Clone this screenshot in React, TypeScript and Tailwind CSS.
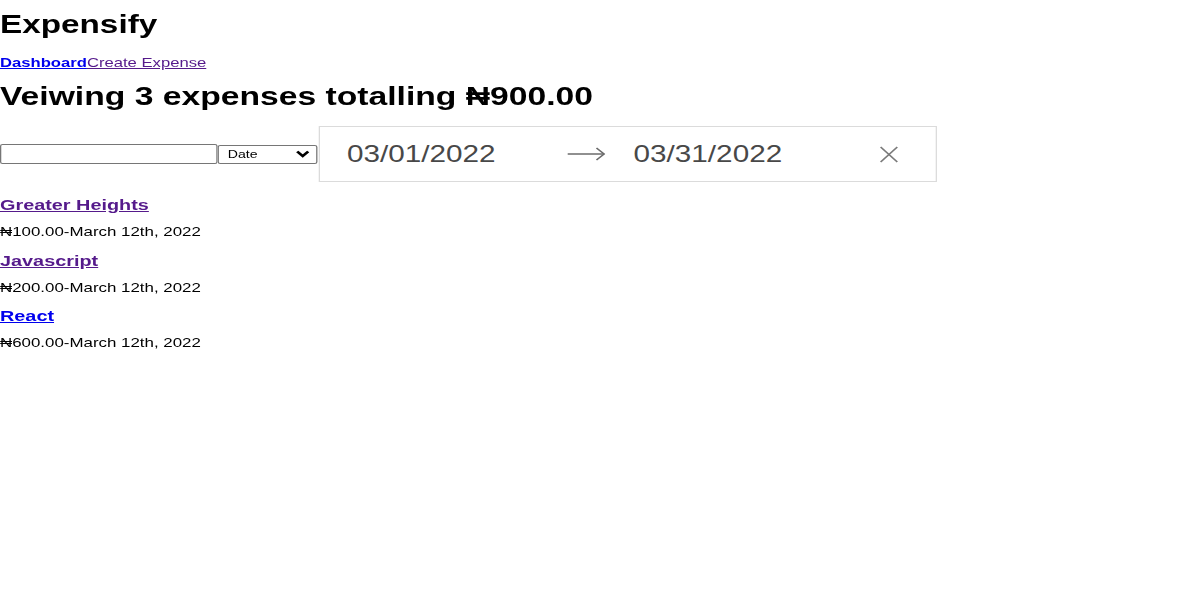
import { useState } from "react";

interface Expense {
    id: number;
    description: string;
    amount: string;
    createdAt: string;
    visited: boolean;
}

const expenses: Expense[] = [
    { id: 1, description: "Greater Heights", amount: "₦100.00", createdAt: "March 12th, 2022", visited: true },
    { id: 2, description: "Javascript", amount: "₦200.00", createdAt: "March 12th, 2022", visited: true },
    { id: 3, description: "React", amount: "₦600.00", createdAt: "March 12th, 2022", visited: false },
];

function ArrowIcon() {
    return (
        <svg width="30" height="16" viewBox="0 0 30 16" fill="none" stroke="#6b6b6b" strokeWidth="1.3">
            <path d="M0.5 8 H29" />
            <path d="M23 2 L29 8 L23 14" />
        </svg>
    );
}

function CloseIcon() {
    return (
        <svg width="15" height="17" viewBox="0 0 15 17" fill="none" stroke="#7a7a7a" strokeWidth="1.3">
            <path d="M1 1 L14 16" />
            <path d="M14 1 L1 16" />
        </svg>
    );
}

export default function App() {
    const [text, setText] = useState("");
    const [sortBy, setSortBy] = useState("date");

    return (
        <div className="min-h-[600px] w-[1200px] overflow-hidden bg-white text-black font-['Liberation_Sans',Arial,sans-serif]">
            {/* the whole page is drawn stretched sideways */}
            <div className="w-[938px] origin-top-left scale-x-[1.28]">
                <h1 className="pt-[9px] text-[26px] leading-[30px] font-bold">Expensify</h1>

                <nav className="mt-[16px] flex text-[13px] leading-[15px]">
                    <a href="#" className="font-bold text-[#0000ee] underline">Dashboard</a>
                    <a href="#" className="text-[#551a8b] underline">Create Expense</a>
                </nav>

                <h2 className="mt-[11px] text-[26.3px] leading-[30px] font-bold">
                    Veiwing 3 expenses totalling ₦900.00
                </h2>

                <div className="mt-[15px] flex items-center">
                    <input
                        type="text"
                        value={text}
                        onChange={(e) => setText(e.target.value)}
                        className="h-[20px] w-[170px] rounded-[2px] border border-[#767676] bg-white px-1 text-[11px]"
                    />
                    <div className="relative flex h-[19px] w-[78px] items-center rounded-[2px] border border-[#767676] bg-white">
                        <select
                            value={sortBy}
                            onChange={(e) => setSortBy(e.target.value)}
                            className="h-full w-full appearance-none bg-transparent pl-[7px] text-[11px] text-black"
                        >
                            <option value="date">Date</option>
                            <option value="amount">Amount</option>
                        </select>
                        <svg className="pointer-events-none absolute right-[5px]" width="11" height="8" viewBox="0 0 11 8" fill="none" stroke="#000" strokeWidth="2.4">
                            <path d="M1.2 1.5 L5.5 6 L9.8 1.5" />
                        </svg>
                    </div>

                    <div className="ml-[1px] flex h-[56px] w-[483px] items-center border border-[#dbdbdb] bg-white">
                        <span className="ml-[21px] w-[172px] text-[23.2px] text-[#484848]">03/01/2022</span>
                        <ArrowIcon />
                        <span className="ml-[22px] w-[192px] text-[23.2px] text-[#484848]">03/31/2022</span>
                        <CloseIcon />
                    </div>
                </div>

                <div className="mt-[12px] flex flex-col">
                    {expenses.map((expense) => (
                        <div key={expense.id} className="flex flex-col">
                            <a
                                href="#"
                                className={`text-[15.5px] leading-[22px] font-bold underline ${expense.visited ? "text-[#551a8b]" : "text-[#0000ee]"}`}
                            >
                                {expense.description}
                            </a>
                            <p className="mt-[8px] mb-[9.5px] text-[13.2px] leading-[16px]">
                                {expense.amount}-{expense.createdAt}
                            </p>
                        </div>
                    ))}
                </div>
            </div>
        </div>
    );
}
